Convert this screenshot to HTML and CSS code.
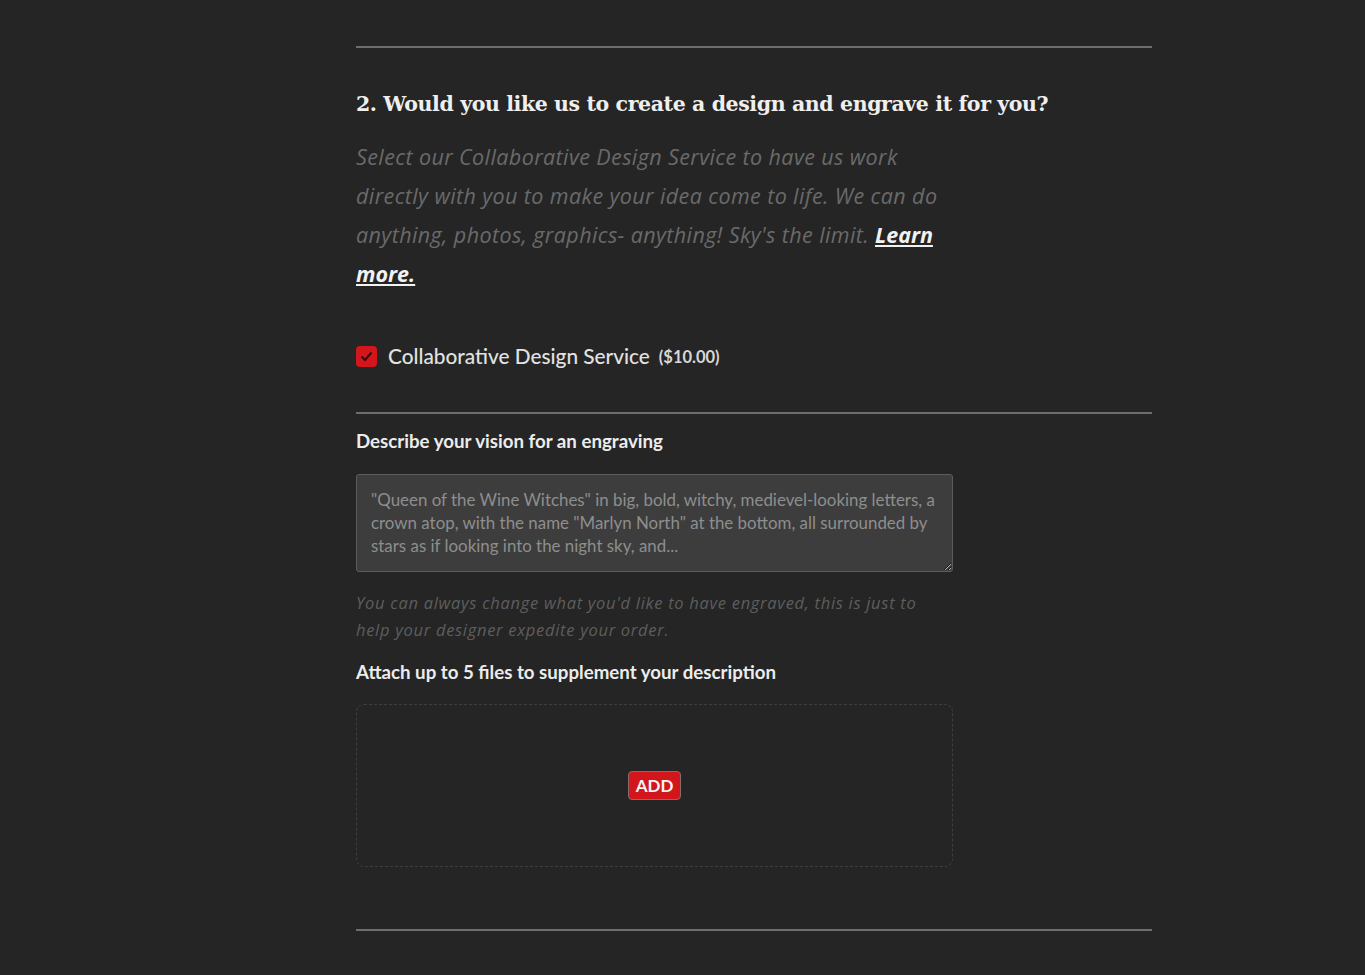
FILE: index.html
```html
<!DOCTYPE html>
<html lang="en">
<head>
    <meta charset="UTF-8">
    <meta name="viewport" content="width=device-width, initial-scale=1.0">
    <title>Engraving options</title>
    <link rel="stylesheet" href="styles.css">
</head>
<body>
    <div class="container">
        <hr class="rule">
        <h2 class="step-title">2. Would you like us to create a design and engrave it for you?</h2>
        <p class="intro">Select our Collaborative Design Service to have us work directly with you to make your idea come to life. We can do anything, photos, graphics- anything! Sky's the limit. <a href="#" class="learn">Learn more.</a></p>

        <label class="option">
            <span class="checkbox">
                <svg width="13" height="11" viewBox="0 0 13 11"><path d="M1.5 5.5 L5 9 L11.5 1.5" fill="none" stroke="#3a0a0c" stroke-width="2"/></svg>
            </span>
            <span class="option-name">Collaborative Design Service</span>
            <span class="option-price">($10.00)</span>
        </label>

        <hr class="rule rule-mid">

        <div class="field">
            <label class="field-label" for="vision">Describe your vision for an engraving</label>
            <textarea id="vision" class="vision" placeholder="&quot;Queen of the Wine Witches&quot; in big, bold, witchy, medievel-looking letters, a crown atop, with the name &quot;Marlyn North&quot; at the bottom, all surrounded by stars as if looking into the night sky, and..."></textarea>
            <p class="hint">You can always change what you'd like to have engraved, this is just to help your designer expedite your order.</p>
        </div>

        <div class="field">
            <div class="field-label">Attach up to 5 files to supplement your description</div>
            <div class="dropzone">
                <button class="add-btn" type="button">ADD</button>
            </div>
        </div>

        <hr class="rule rule-end">
    </div>
</body>
</html>
```

FILE: styles.css
```css
body {
    margin: 0;
    padding: 0;
    background-color: #252525;
    font-family: Lato, "Open Sans", sans-serif;
    color: #e6e6e6;
}
.container {
    width: 796px;
    margin: 0 0 0 356px;
    padding-top: 46px;
}
.rule {
    border: none;
    border-top: 2px solid #6e6e6e;
    margin: 0;
}
.step-title {
    font-family: "DejaVu Serif", serif;
    font-weight: bold;
    font-size: 20.5px;
    letter-spacing: -0.4px;
    color: #efefef;
    margin: 41px 0 0;
    line-height: 30px;
}
.intro {
    width: 590px;
    margin: 18px 0 0;
    font-family: "Open Sans", sans-serif;
    font-style: italic;
    font-size: 21.5px;
    letter-spacing: 0.4px;
    line-height: 39px;
    color: #6a6a6a;
}
.learn {
    color: #f2f2f2;
    font-weight: bold;
    letter-spacing: 0;
    text-decoration: underline;
}
.option {
    display: flex;
    align-items: center;
    margin-top: 51px;
    height: 24px;
    line-height: 1;
}
.checkbox {
    width: 21px;
    height: 21px;
    border-radius: 4px;
    background: #d3161c;
    display: flex;
    align-items: center;
    justify-content: center;
    margin-right: 11px;
}
.option-name {
    font-size: 20.8px;
    color: #e2e2e2;
    font-weight: 500;
}
.option-price {
    font-size: 16.5px;
    font-weight: bold;
    color: #d8d8d8;
    margin-left: 9px;
    padding-top: 2px;
}
.rule-mid {
    margin-top: 44px;
}
.field {
    margin-top: 16px;
}
.field-label {
    display: block;
    font-size: 18.7px;
    font-weight: bold;
    color: #ececec;
    line-height: 22px;
}
.vision {
    display: block;
    box-sizing: border-box;
    width: 597px;
    height: 98px;
    margin-top: 22px;
    padding: 13px 14px;
    background: #3d3d3d;
    border: 1px solid #5c5c5c;
    border-radius: 3px;
    font-family: Lato, sans-serif;
    font-size: 16.9px;
    line-height: 23px;
    color: #ddd;
}
.vision::placeholder {
    color: #8e8e8e;
}
.hint {
    width: 590px;
    margin: 17px 0 0;
    font-family: "Open Sans", sans-serif;
    font-style: italic;
    font-size: 16.5px;
    letter-spacing: 0.7px;
    line-height: 27px;
    color: #5e5e5e;
}
.field + .field {
    margin-top: 18px;
}
.dropzone {
    box-sizing: border-box;
    width: 597px;
    height: 163px;
    margin-top: 21px;
    border: 1px dashed #3e3e3e;
    border-radius: 8px;
    display: flex;
    align-items: center;
    justify-content: center;
}
.add-btn {
    background: #d3161c;
    color: #f4f4f4;
    border: 1px solid #8a6a6a;
    border-radius: 4px;
    font-family: Lato, sans-serif;
    font-weight: bold;
    font-size: 17px;
    padding: 3px 7px;
    line-height: 21px;
}
.rule-end {
    margin-top: 62px;
}
```
